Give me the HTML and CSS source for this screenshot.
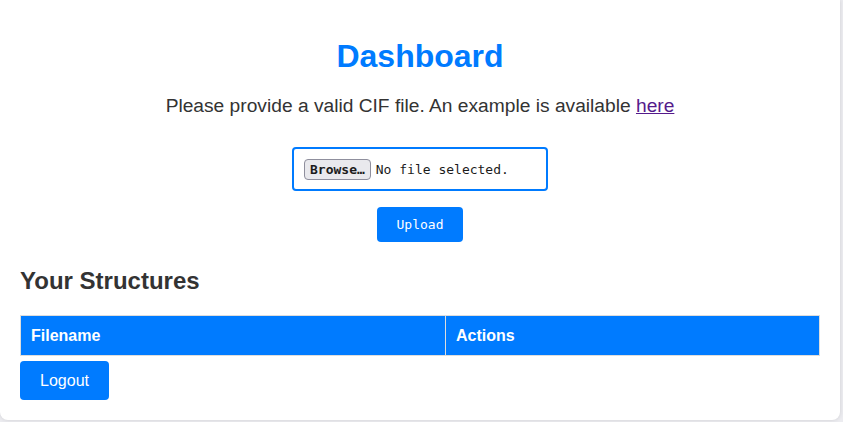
FILE: index.html
```html
<!DOCTYPE html>
<html lang="en">
<head>
<meta charset="utf-8">
<title>Dashboard</title>
<link rel="stylesheet" href="styles.css">
</head>
<body>
<div class="card">
  <h1 class="title">Dashboard</h1>
  <p class="intro">Please provide a valid CIF file. An example is available <a class="link" href="#">here</a></p>
  <form class="upload-form">
    <div class="file-box">
      <span class="browse">Browse…</span>
      <span class="file-status">No file selected.</span>
    </div>
    <button class="upload-btn" type="button">Upload</button>
  </form>
  <h2 class="section-title">Your Structures</h2>
  <table class="structures">
    <thead>
      <tr>
        <th class="col-name">Filename</th>
        <th class="col-actions">Actions</th>
      </tr>
    </thead>
  </table>
  <button class="logout-btn" type="button">Logout</button>
</div>
</body>
</html>
```
FILE: styles.css
```css
html, body {
  margin: 0;
  padding: 0;
}
body {
  background: #ececf0;
  font-family: "Liberation Sans", Arial, sans-serif;
  color: #333;
  height: 422px;
  overflow: hidden;
}
.card {
  box-sizing: border-box;
  width: 840px;
  height: 420px;
  background: #fff;
  border-radius: 0 0 8px 8px;
  box-shadow: 0 0 4px rgba(0, 0, 0, 0.12);
  padding: 38px 20px 20px;
}
.title {
  margin: 0;
  text-align: center;
  color: #007bff;
  font-size: 32px;
  font-weight: bold;
  line-height: 37px;
}
.intro {
  margin: 20px 0 0;
  text-align: center;
  font-size: 19.2px;
  line-height: 21px;
  color: #333;
}
.link {
  color: #551a8b;
}
.upload-form {
  margin-top: 31px;
  display: flex;
  flex-direction: column;
  align-items: center;
}
.file-box {
  box-sizing: border-box;
  width: 256px;
  height: 44px;
  border: 2px solid #007bff;
  border-radius: 4px;
  display: flex;
  align-items: center;
  padding: 0 10px;
  gap: 5px;
  font-family: "DejaVu Sans Mono", monospace;
  font-size: 13px;
  color: #1b1b1b;
}
.browse {
  box-sizing: border-box;
  height: 21px;
  padding: 0 5px;
  display: flex;
  align-items: center;
  background: #e9e9ed;
  border: 1px solid #8f8f9d;
  border-radius: 4px;
  font-weight: bold;
  font-size: 13px;
}
.upload-btn {
  margin-top: 16px;
  box-sizing: border-box;
  width: 86px;
  height: 35px;
  border: none;
  border-radius: 4px;
  background: #007bff;
  color: #fff;
  font-family: "DejaVu Sans Mono", monospace;
  font-size: 13px;
  padding: 0;
}
.section-title {
  margin: 25px 0 0;
  font-size: 24px;
  line-height: 28px;
  font-weight: bold;
  color: #333;
}
.structures {
  margin-top: 20px;
  width: 800px;
  border-collapse: collapse;
}
.structures th {
  background: #007bff;
  color: #fff;
  text-align: left;
  font-size: 16px;
  font-weight: bold;
  height: 40px;
  box-sizing: border-box;
  padding: 0 10px;
  border: 1px solid #ddd;
}
.col-name {
  width: 425px;
}
.logout-btn {
  margin-top: 5px;
  box-sizing: border-box;
  width: 89px;
  height: 39px;
  border: none;
  border-radius: 4px;
  background: #007bff;
  color: #fff;
  font-family: "Liberation Sans", Arial, sans-serif;
  font-size: 16px;
  padding: 0;
}
```
